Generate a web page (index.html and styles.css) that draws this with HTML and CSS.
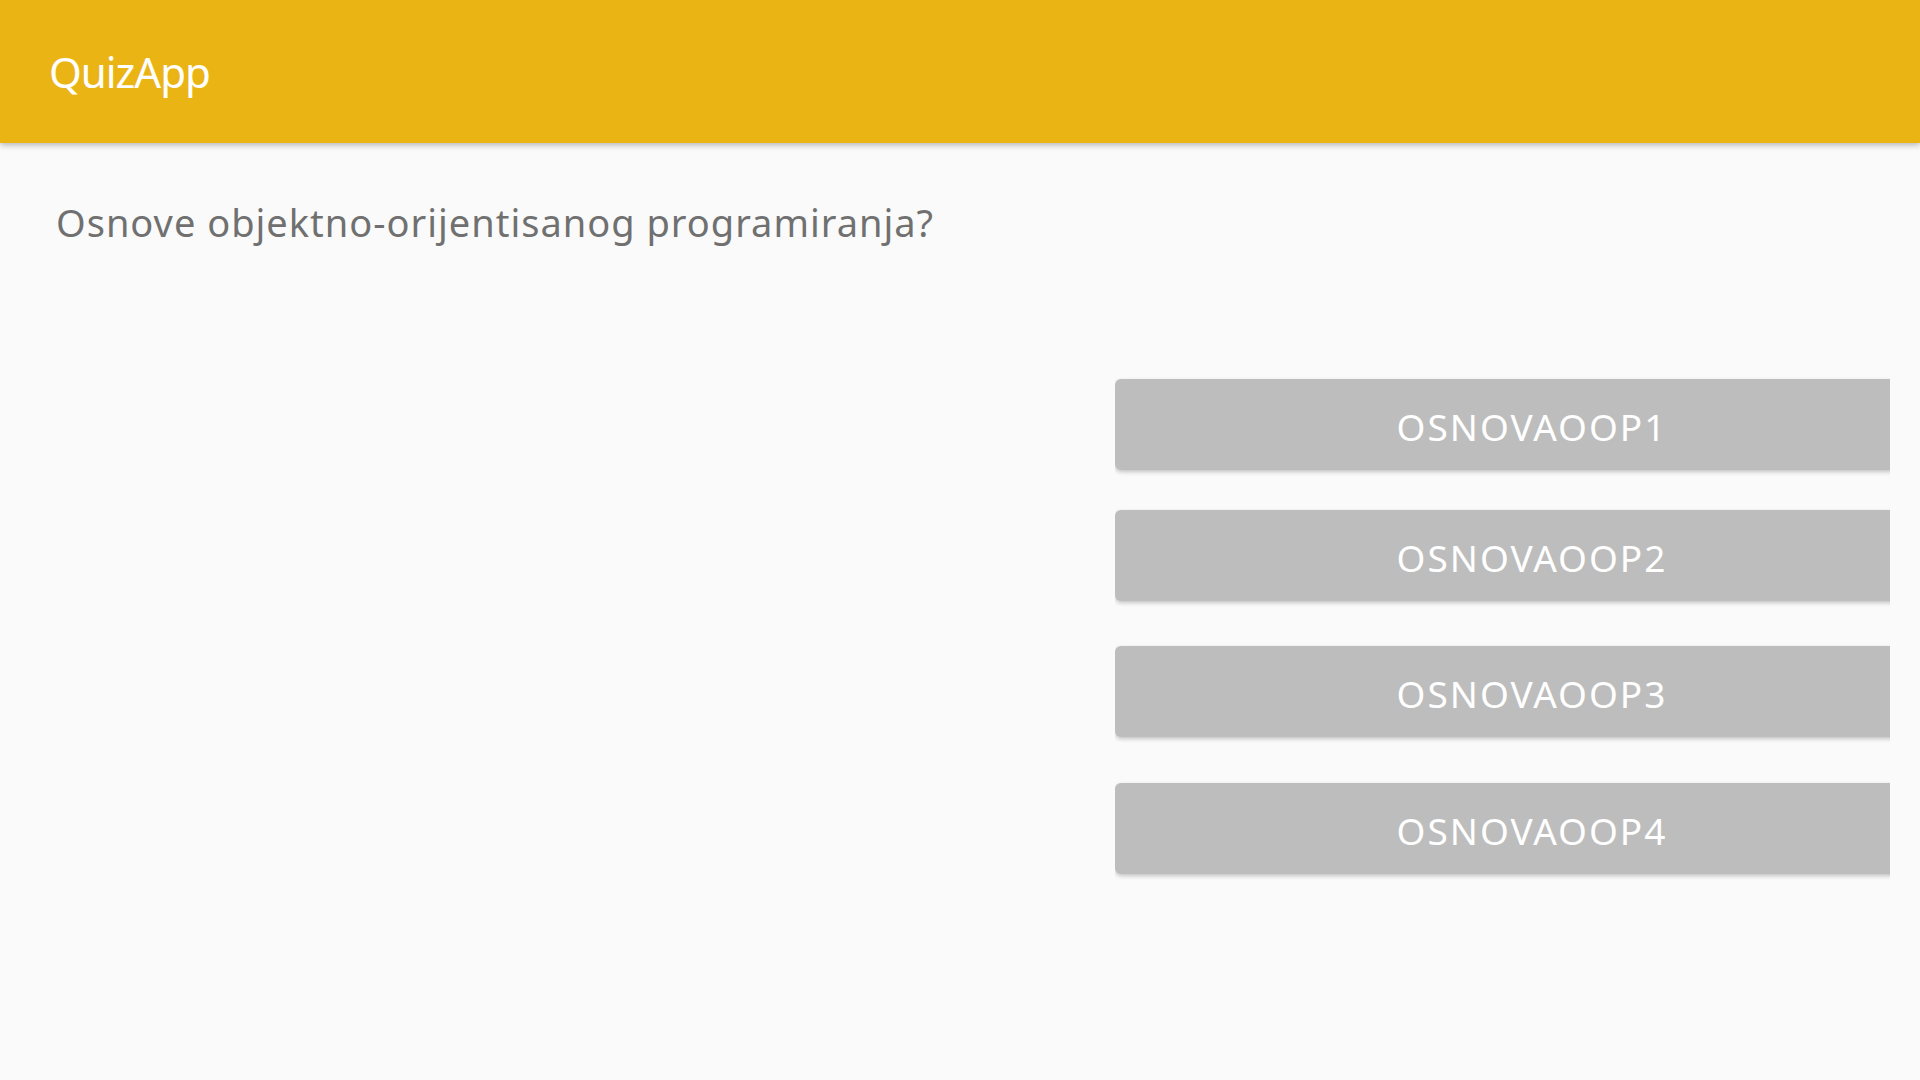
FILE: index.html
```html
<!DOCTYPE html>
<html>
<head>
<meta charset="utf-8">
<link rel="stylesheet" href="styles.css">
</head>
<body>
<header class="appbar"><span class="title">QuizApp</span></header>
<main class="content">
  <p class="question">Osnove objektno-orijentisanog programiranja?</p>
  <div class="answers">
    <button class="answer a1">OSNOVAOOP1</button>
    <button class="answer a2">OSNOVAOOP2</button>
    <button class="answer a3">OSNOVAOOP3</button>
    <button class="answer a4">OSNOVAOOP4</button>
  </div>
</main>
</body>
</html>
```
FILE: styles.css
```css
html, body {
  margin: 0;
  padding: 0;
  width: 1920px;
  height: 1080px;
  overflow: hidden;
  background: #fafafa;
  font-family: "Noto Sans", "Open Sans", sans-serif;
}
.appbar {
  height: 143px;
  background: #ebb415;
  display: flex;
  align-items: center;
  padding-left: 49px;
  box-shadow: 0 2px 6px rgba(0,0,0,0.28);
  position: relative;
  z-index: 1;
}
.title {
  color: #ffffff;
  font-size: 42px;
  line-height: 57px;
  letter-spacing: -1px;
}
.content {
  display: flex;
  flex-direction: column;
}
.question {
  margin: 53px 0 0 56px;
  font-size: 38px;
  line-height: 52px;
  letter-spacing: 1px;
  color: #707070;
}
.answers {
  display: flex;
  flex-direction: column;
  margin-left: 1115px;
  width: 775px;
  overflow-x: clip;
  margin-top: 131px;
}
.answer {
  width: 832px;
  height: 91px;
  flex: none;
  border: none;
  border-radius: 6px;
  background: #bdbdbd;
  color: #ffffff;
  font-family: "Noto Sans", "Open Sans", sans-serif;
  font-size: 37px;
  letter-spacing: 2px;
  padding: 3px 0 0 2px;
  box-shadow: 0 2px 4px rgba(0,0,0,0.22);
}
.a2 { margin-top: 40px; }
.a3 { margin-top: 45px; }
.a4 { margin-top: 46px; }
```
